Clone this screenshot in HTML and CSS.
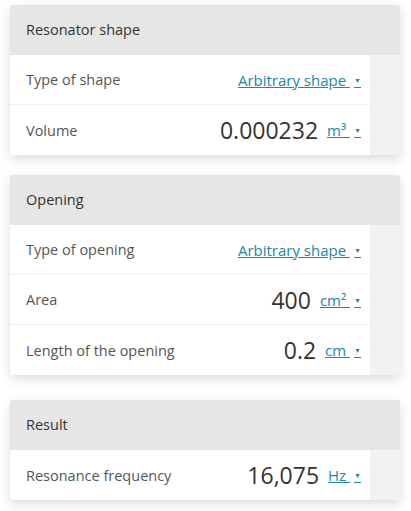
FILE: index.html
```html
<!DOCTYPE html>
<html lang="en">
<head>
    <meta charset="UTF-8">
    <meta name="viewport" content="width=device-width, initial-scale=1.0">
    <title>Helmholtz Resonator</title>
    <link rel="stylesheet" href="styles.css">
</head>
<body>
    <div class="card">
        <div class="card-header">Resonator shape</div>
        <div class="row">
            <span class="label">Type of shape</span>
            <a class="unit">Arbitrary shape <span class="caret">&#9660;</span></a>
        </div>
        <div class="row">
            <span class="label">Volume</span>
            <span class="value">0.000232</span>
            <a class="unit">m&sup3; <span class="caret">&#9660;</span></a>
        </div>
    </div>

    <div class="card">
        <div class="card-header">Opening</div>
        <div class="row">
            <span class="label">Type of opening</span>
            <a class="unit">Arbitrary shape <span class="caret">&#9660;</span></a>
        </div>
        <div class="row">
            <span class="label">Area</span>
            <span class="value">400</span>
            <a class="unit">cm&sup2; <span class="caret">&#9660;</span></a>
        </div>
        <div class="row">
            <span class="label">Length of the opening</span>
            <span class="value">0.2</span>
            <a class="unit">cm <span class="caret">&#9660;</span></a>
        </div>
    </div>

    <div class="card result">
        <div class="card-header">Result</div>
        <div class="row">
            <span class="label">Resonance frequency</span>
            <span class="value">16,075</span>
            <a class="unit">Hz <span class="caret">&#9660;</span></a>
        </div>
    </div>
</body>
</html>
```

FILE: styles.css
```css
body {
    margin: 0;
    padding: 5px 11px 0 10px;
    font-family: 'Open Sans', sans-serif;
    background: #fff;
    color: #333;
}

.card {
    background: #f2f2f2;
    border-radius: 3px;
    box-shadow: 0 4px 12px rgba(0, 0, 0, 0.14);
    margin-bottom: 20px;
    overflow: hidden;
}

.result {
    margin-top: 25px;
}

.card-header {
    background: #e6e6e6;
    height: 50px;
    line-height: 50px;
    padding-left: 16px;
    font-size: 14.5px;
    color: #333;
}

.row {
    display: flex;
    align-items: center;
    height: 49px;
    margin-right: 30px;
    padding: 0 9px 0 16px;
    background: #fff;
    border-bottom: 1px solid #f0f0f0;
}

.row:last-child {
    border-bottom: none;
    height: 50px;
}

.label {
    flex: 1;
    font-size: 14.5px;
    color: #555;
}

.value {
    font-size: 23px;
    color: #333;
    margin-right: 9px;
}

.unit {
    font-size: 15px;
    color: #1b87aa;
    text-decoration: underline;
    cursor: pointer;
}

.caret {
    font-size: 7px;
    vertical-align: 3px;
    margin-left: 4px;
}
```
